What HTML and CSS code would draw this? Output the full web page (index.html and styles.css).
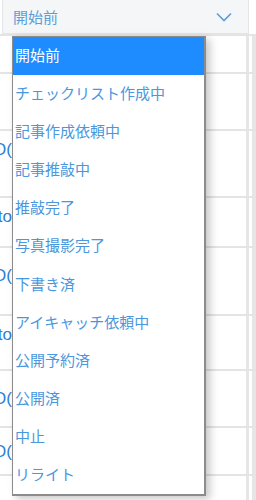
FILE: index.html
```html
<!DOCTYPE html>
<html lang="ja">
<head>
<meta charset="utf-8">
<link rel="stylesheet" href="styles.css">
</head>
<body>
<div class="page">
  <div class="select">
    <span class="select-value">開始前</span>
    <svg class="chevron" width="16" height="10" viewBox="0 0 16 10"><path d="M1 1.5 L8 8.5 L15 1.5" fill="none" stroke="#5b9fd9" stroke-width="1.6"/></svg>
  </div>
  <div class="table">
    <div class="row" style="height:38px"><div class="cell-left"></div><div class="cell-main"></div><div class="sep"></div><div class="cell-right"></div></div>
    <div class="row" style="height:57px"><div class="cell-left"></div><div class="cell-main"></div><div class="sep"></div><div class="cell-right"></div></div>
    <div class="row" style="height:67px"><div class="cell-left pt-a"><span class="frag">OO(</span></div><div class="cell-main"></div><div class="sep"></div><div class="cell-right"></div></div>
    <div class="row" style="height:50px"><div class="cell-left pt-a"><span class="frag">sto</span></div><div class="cell-main"></div><div class="sep"></div><div class="cell-right"></div></div>
    <div class="row" style="height:68px"><div class="cell-left pt-c"><span class="frag">OO(</span></div><div class="cell-main"></div><div class="sep"></div><div class="cell-right"></div></div>
    <div class="row" style="height:55px"><div class="cell-left pt-a"><span class="frag">sto</span></div><div class="cell-main"></div><div class="sep"></div><div class="cell-right"></div></div>
    <div class="row" style="height:57px"><div class="cell-left pt-c"><span class="frag">OO(</span></div><div class="cell-main"></div><div class="sep"></div><div class="cell-right"></div></div>
    <div class="row" style="height:48px"><div class="cell-left pt-b"><span class="frag">OO(</span></div><div class="cell-main"></div><div class="sep"></div><div class="cell-right"></div></div>
    <div class="row" style="height:40px"><div class="cell-left"></div><div class="cell-main"></div><div class="sep"></div><div class="cell-right"></div></div>
  </div>
  <ul class="dropdown">
    <li class="item selected">開始前</li>
    <li class="item">チェックリスト作成中</li>
    <li class="item">記事作成依頼中</li>
    <li class="item">記事推敲中</li>
    <li class="item">推敲完了</li>
    <li class="item">写真撮影完了</li>
    <li class="item">下書き済</li>
    <li class="item">アイキャッチ依頼中</li>
    <li class="item">公開予約済</li>
    <li class="item">公開済</li>
    <li class="item">中止</li>
    <li class="item">リライト</li>
  </ul>
</div>
</body>
</html>
```
FILE: styles.css
```css
html, body {
  margin: 0;
  padding: 0;
  background: #ffffff;
}
body {
  font-family: "Noto Sans CJK JP", "Noto Sans", sans-serif;
  width: 256px;
  height: 500px;
  overflow: hidden;
}
.page {
  position: relative;
  width: 256px;
  height: 500px;
  overflow: hidden;
}
.select {
  box-sizing: border-box;
  margin: 0 7px 0 2px;
  height: 34px;
  background: #f4f6f7;
  border: 1px solid #e2e6e8;
  border-top: none;
  display: flex;
  align-items: center;
  justify-content: space-between;
  padding: 0 16px 0 10px;
}
.select-value {
  font-size: 15px;
  color: #5b9fd9;
  line-height: 20px;
}
.chevron {
  display: block;
}
.table {
  display: flex;
  flex-direction: column;
}
.row {
  box-sizing: border-box;
  display: flex;
  border-top: 2px solid #e4e4e4;
}
.cell-left {
  width: 12px;
  overflow: hidden;
  display: flex;
  align-items: flex-start;
  justify-content: flex-end;
  padding-top: 8px;
}
.cell-left.pt-a { padding-top: 8px; }
.cell-left.pt-b { padding-top: 13px; }
.cell-left.pt-c { padding-top: 17px; }
.frag {
  font-family: "Liberation Sans", sans-serif;
  font-size: 17px;
  line-height: 22px;
  color: #2b7fd8;
  white-space: nowrap;
}
.cell-main {
  flex: 1;
}
.sep {
  width: 3px;
  background: #e6e6e6;
}
.cell-right {
  width: 3px;
  border-right: 4px solid #e6e6e6;
}
.dropdown {
  position: absolute;
  top: 36px;
  left: 12px;
  width: 191px;
  margin: 0;
  padding: 0;
  list-style: none;
  background: #ffffff;
  border: 1px solid #8c8c8c;
  border-right-width: 2px;
  border-bottom-width: 2px;
  box-shadow: 4px 3px 8px rgba(0, 0, 0, 0.22);
}
.item {
  font-size: 15px;
  line-height: 22.1px;
  padding: 7px 2px 9px;
  color: #4a97dd;
  white-space: nowrap;
  overflow: hidden;
}
.item.selected {
  background: #1e8cff;
  color: #ffffff;
}
```
